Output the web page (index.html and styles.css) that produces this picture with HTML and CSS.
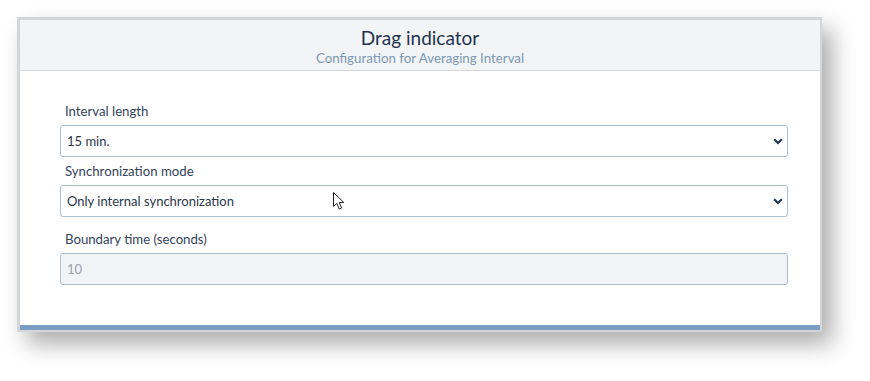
FILE: index.html
```html
<!DOCTYPE html>
<html>
<head>
<meta charset="utf-8">
<link rel="stylesheet" href="styles.css">
</head>
<body>
<div class="card">
  <div class="header">
    <div class="title">Drag indicator</div>
    <div class="subtitle">Configuration for Averaging Interval</div>
  </div>
  <div class="body">
    <div class="group">
      <div class="label">Interval length</div>
      <div class="field select"><span>15 min.</span><svg class="chev" width="10" height="7" viewBox="0 0 10 7"><path d="M1.2 1.3 L5 5 L8.8 1.3" fill="none" stroke="#1e3550" stroke-width="2.2"/></svg></div>
    </div>
    <div class="group">
      <div class="label">Synchronization mode</div>
      <div class="field select"><span>Only internal synchronization</span><svg class="chev" width="10" height="7" viewBox="0 0 10 7"><path d="M1.2 1.3 L5 5 L8.8 1.3" fill="none" stroke="#1e3550" stroke-width="2.2"/></svg>
        <svg class="cursor" width="14" height="20" viewBox="0 0 14 20"><path d="M1.5 1.5 L1.5 15.5 L4.8 12.4 L7.2 18 L9.6 17 L7.3 11.5 L11.8 11.5 Z" fill="#fff" stroke="#222" stroke-width="1"/></svg>
      </div>
    </div>
    <div class="group gap">
      <div class="label">Boundary time (seconds)</div>
      <div class="field disabled"><span>10</span></div>
    </div>
  </div>
  <div class="bar"></div>
</div>
</body>
</html>
```
FILE: styles.css
```css
html, body {
  margin: 0;
  padding: 0;
  background: #fff;
}
body {
  min-height: 381px;
  box-sizing: border-box;
  padding: 17px 0 0 17px;
  font-family: Lato, "Open Sans", sans-serif;
}
.card {
  width: 800px;
  border: 2px solid #d3d6d9;
  border-top-width: 3px;
  border-left-width: 3px;
  background: #fff;
  box-shadow: 10px 12px 22px rgba(0, 0, 0, 0.33);
}
.header {
  height: 51px;
  background: #f3f4f6;
  border-bottom: 1px solid #d4d7db;
  text-align: center;
  box-sizing: border-box;
  padding-top: 5px;
}
.title {
  font-size: 19px;
  line-height: 25px;
  color: #1e3350;
}
.subtitle {
  font-size: 13.3px;
  line-height: 16px;
  color: #7b98b4;
}
.body {
  padding: 30px 32px 40px 40px;
}
.group + .group {
  margin-top: 4px;
}
.group.gap {
  margin-top: 12px;
}
.label {
  font-size: 13.2px;
  line-height: 20px;
  color: #34435a;
  padding-left: 5px;
  margin-bottom: 4px;
}
.field {
  position: relative;
  height: 32px;
  box-sizing: border-box;
  border: 1px solid #a9bdd3;
  border-radius: 3px;
  display: flex;
  align-items: center;
  padding: 0 6px;
  font-size: 13px;
  color: #2a3648;
}
.select {
  justify-content: space-between;
  padding-right: 4px;
}
.disabled {
  background: #f2f3f5;
  color: #9aa3ad;
}
.cursor {
  position: absolute;
  left: 271px;
  top: 5px;
}
.bar {
  height: 5px;
  background: #7b9cc4;
}
```
